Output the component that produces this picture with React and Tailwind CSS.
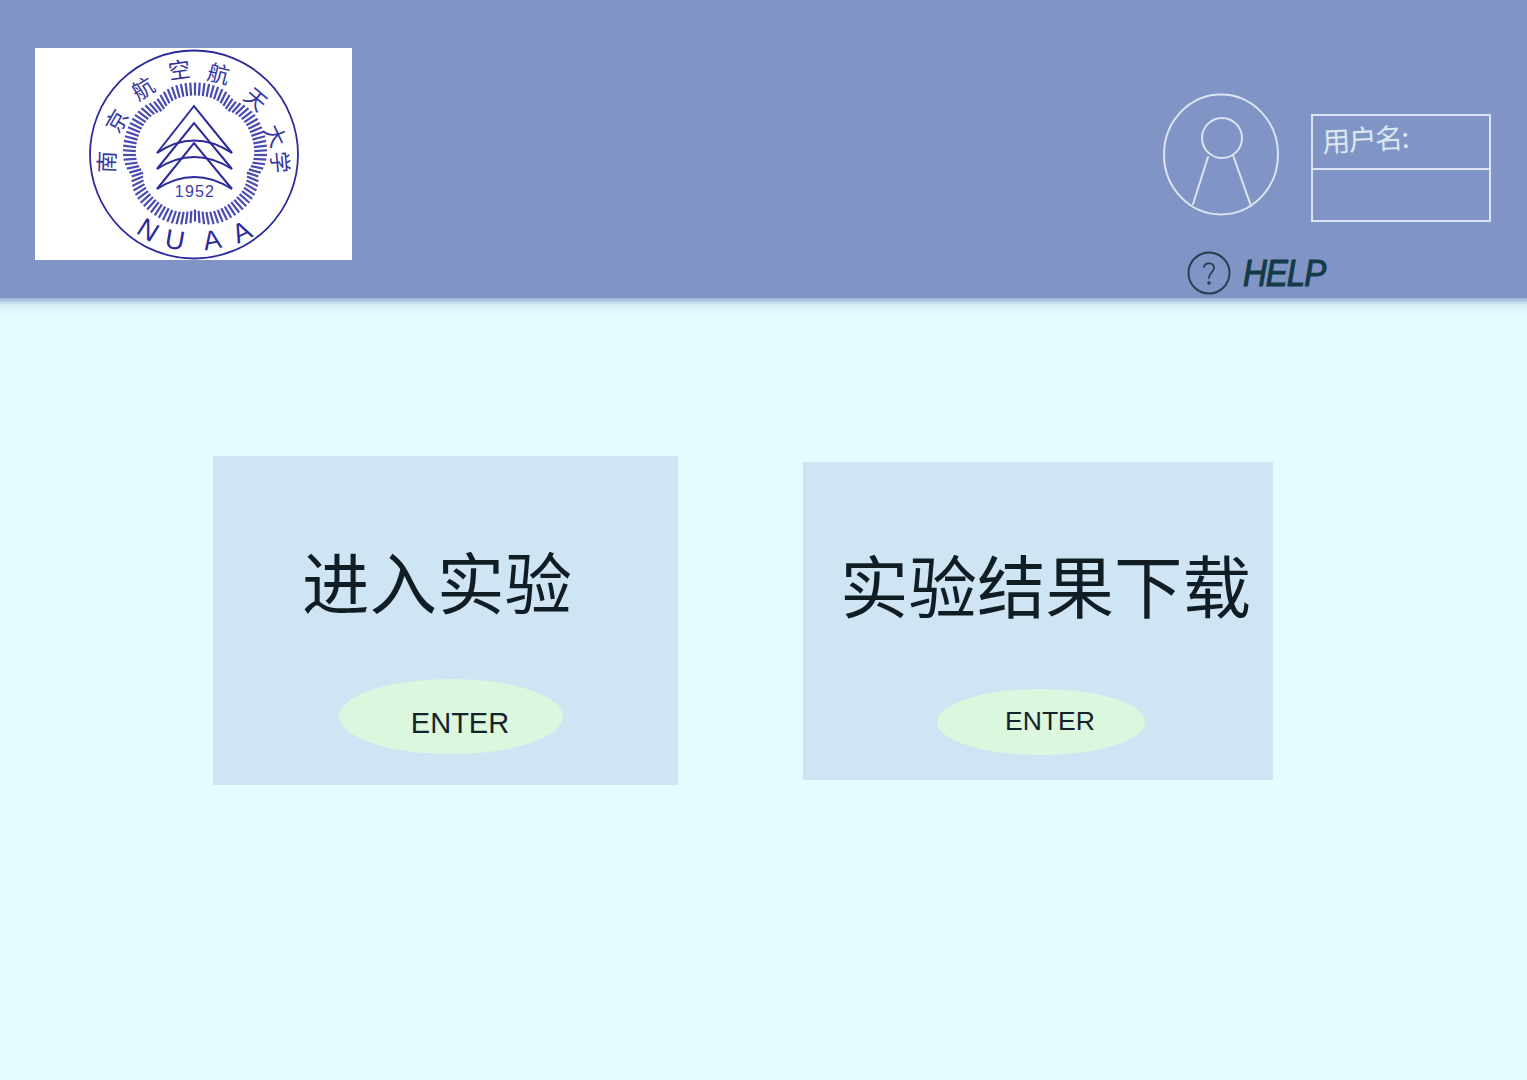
import React from "react";

const cjk = '"Noto Sans CJK SC", "Noto Sans", sans-serif';

const sealChars = [
  { c: "南", x: 70, y: 114, r: -88 },
  { c: "京", x: 80, y: 72, r: -60 },
  { c: "航", x: 107, y: 39, r: -32 },
  { c: "空", x: 144, y: 20, r: -8 },
  { c: "航", x: 184, y: 24, r: 14 },
  { c: "天", x: 222, y: 50, r: 40 },
  { c: "大", x: 242, y: 87, r: 65 },
  { c: "学", x: 247, y: 114, r: 85 },
];

const sealLatin = [
  { c: "N", x: 113, y: 182, r: 32 },
  { c: "U", x: 140, y: 192, r: 10 },
  { c: "A", x: 177, y: 192, r: -10 },
  { c: "A", x: 207, y: 184, r: -26 },
];

// ring of radial ticks around the three chevrons, pinched in at five notches
const ringTicks = Array.from({ length: 96 }, (_, i) => {
  const a = (i / 96) * Math.PI * 2;
  const notch = Math.pow(1 - Math.abs(Math.cos(2.5 * a)), 2);
  const outer = 72.5 - 6 * notch;
  const inner = 59.5 - 5 * notch;
  return {
    x1: 160 + Math.sin(a) * inner,
    y1: 107 - Math.cos(a) * inner,
    x2: 160 + Math.sin(a) * outer,
    y2: 107 - Math.cos(a) * outer,
  };
});

const Seal = () => (
  <svg width="317" height="212" viewBox="0 0 317 212" fill="none" stroke="#2b2b9c">
    <circle cx="159" cy="106.5" r="104" strokeWidth="1.8" />
    {ringTicks.map((t, i) => (
      <line key={i} x1={t.x1} y1={t.y1} x2={t.x2} y2={t.y2} strokeWidth="2.2" stroke="#4a4ab0" />
    ))}
    <g strokeWidth="2">
      <path d="M122 105 L159 58 L197 105" />
      <path d="M122 105 Q159 80 197 105" />
      <path d="M122 121 L159 75 L197 121" />
      <path d="M122 121 Q159 97 197 121" />
      <path d="M122 141 L159 95 L197 141" />
      <path d="M122 141 Q159 117 197 141" />
    </g>
    <text
      x="160"
      y="149"
      textAnchor="middle"
      fill="#3d3da6"
      stroke="none"
      fontSize="16"
      letterSpacing="1.2"
      fontFamily='"Liberation Sans", sans-serif'
    >
      1952
    </text>
    {sealChars.map((s, i) => (
      <text
        key={i}
        x={s.x}
        y={s.y}
        textAnchor="middle"
        dominantBaseline="central"
        transform={`rotate(${s.r} ${s.x} ${s.y})`}
        fill="#34349f"
        stroke="none"
        fontSize="22"
        fontFamily={cjk}
      >
        {s.c}
      </text>
    ))}
    {sealLatin.map((s, i) => (
      <text
        key={i}
        x={s.x}
        y={s.y}
        textAnchor="middle"
        dominantBaseline="central"
        transform={`rotate(${s.r} ${s.x} ${s.y})`}
        fill="#2b2b9c"
        stroke="none"
        fontSize="27"
        fontFamily='"Liberation Sans", sans-serif'
      >
        {s.c}
      </text>
    ))}
  </svg>
);

const Avatar = () => (
  <svg width="117" height="123" viewBox="0 0 117 123" fill="none" stroke="#dbe5ef" strokeWidth="2" strokeLinecap="round">
    <ellipse cx="58" cy="61.5" rx="57" ry="60" />
    <circle cx="59" cy="45" r="20" />
    <path d="M45 64 L30 111" />
    <path d="M70 62 L88 113" />
  </svg>
);

const HelpIcon = () => (
  <svg width="46" height="46" viewBox="0 0 46 46" fill="none" stroke="#21424f" strokeWidth="2">
    <circle cx="22" cy="23" r="20.5" />
    <path d="M17 17 C18 12 27 12 27 18 C27 22 22 23 22 28" strokeWidth="1.8" strokeLinecap="round" />
    <circle cx="22" cy="33" r="0.8" fill="#21424f" />
  </svg>
);

const Header = () => (
  <header className="flex h-[298px] justify-between bg-[#8095c6] pl-[35px] pr-[36px]">
    <div className="mt-[48px] flex h-[212px] w-[317px] items-center justify-center bg-white">
      <Seal />
    </div>
    <div className="mt-[93px] flex flex-col">
      <div className="flex items-start">
        <Avatar />
        <div className="ml-[31px] mt-[21px] flex h-[108px] w-[180px] flex-col border-2 border-[#dbe5ef]">
          <div className="flex h-[54px] items-start border-b-2 border-[#dbe5ef] pl-[9px]">
            <span
              className="mt-[2px] -rotate-3 text-[28px] leading-[40px] tracking-[-1.5px] text-[#dde7f0]"
              style={{ fontFamily: cjk }}
            >
              用户名:
            </span>
          </div>
        </div>
      </div>
      <div className="relative z-10 ml-[24px] mt-[28px] flex items-center gap-[10px]">
        <HelpIcon />
        <span className="scale-y-110 font-['Liberation_Sans',sans-serif] text-[33px] leading-none italic tracking-[-1px] text-[#143a47] [-webkit-text-stroke:1px_#143a47]">
          HELP
        </span>
      </div>
    </div>
  </header>
);

const ActionCard = ({ title, titleClass, children, className }) => (
  <section className={`flex flex-col bg-[#cfe5f3] ${className}`}>
    <h2 className={`font-['Liberation_Sans','Noto_Sans_CJK_SC',sans-serif] leading-[80px] font-normal whitespace-nowrap text-[#111d24] ${titleClass}`}>
      {title}
    </h2>
    {children}
  </section>
);

export default function App() {
  return (
    <div className="relative min-h-[1080px] w-full overflow-hidden bg-[#e6fbff]">
      <Header />
      <div className="h-[18px] bg-gradient-to-b from-[#9fb5d5] via-[#d6eff6] via-40% to-[#e6fbff]" />
      <main className="ml-[213px] mt-[140px] flex items-start gap-[125px]">
        <ActionCard title="进入实验" titleClass="text-[67.5px]" className="h-[329px] w-[465px] pl-[89px] pt-[90px]">
          <button className="ml-[37px] mt-[53px] flex h-[75px] w-[224px] items-center justify-center rounded-[50%] bg-[#dbf7de] pl-[18px] pt-[14px] font-['Liberation_Sans',sans-serif] text-[29px] leading-none text-[#15242c]">
            ENTER
          </button>
        </ActionCard>
        <ActionCard title="实验结果下载" titleClass="text-[68.5px]" className="mt-[6px] h-[318px] w-[470px] pl-[37px] pt-[88px]">
          <button className="ml-[97px] mt-[59px] flex h-[66px] w-[208px] items-center justify-center rounded-[50%] bg-[#dbf7de] pb-[2px] pl-[18px] font-['Liberation_Sans',sans-serif] text-[26.5px] leading-none text-[#15242c]">
            ENTER
          </button>
        </ActionCard>
      </main>
    </div>
  );
}
